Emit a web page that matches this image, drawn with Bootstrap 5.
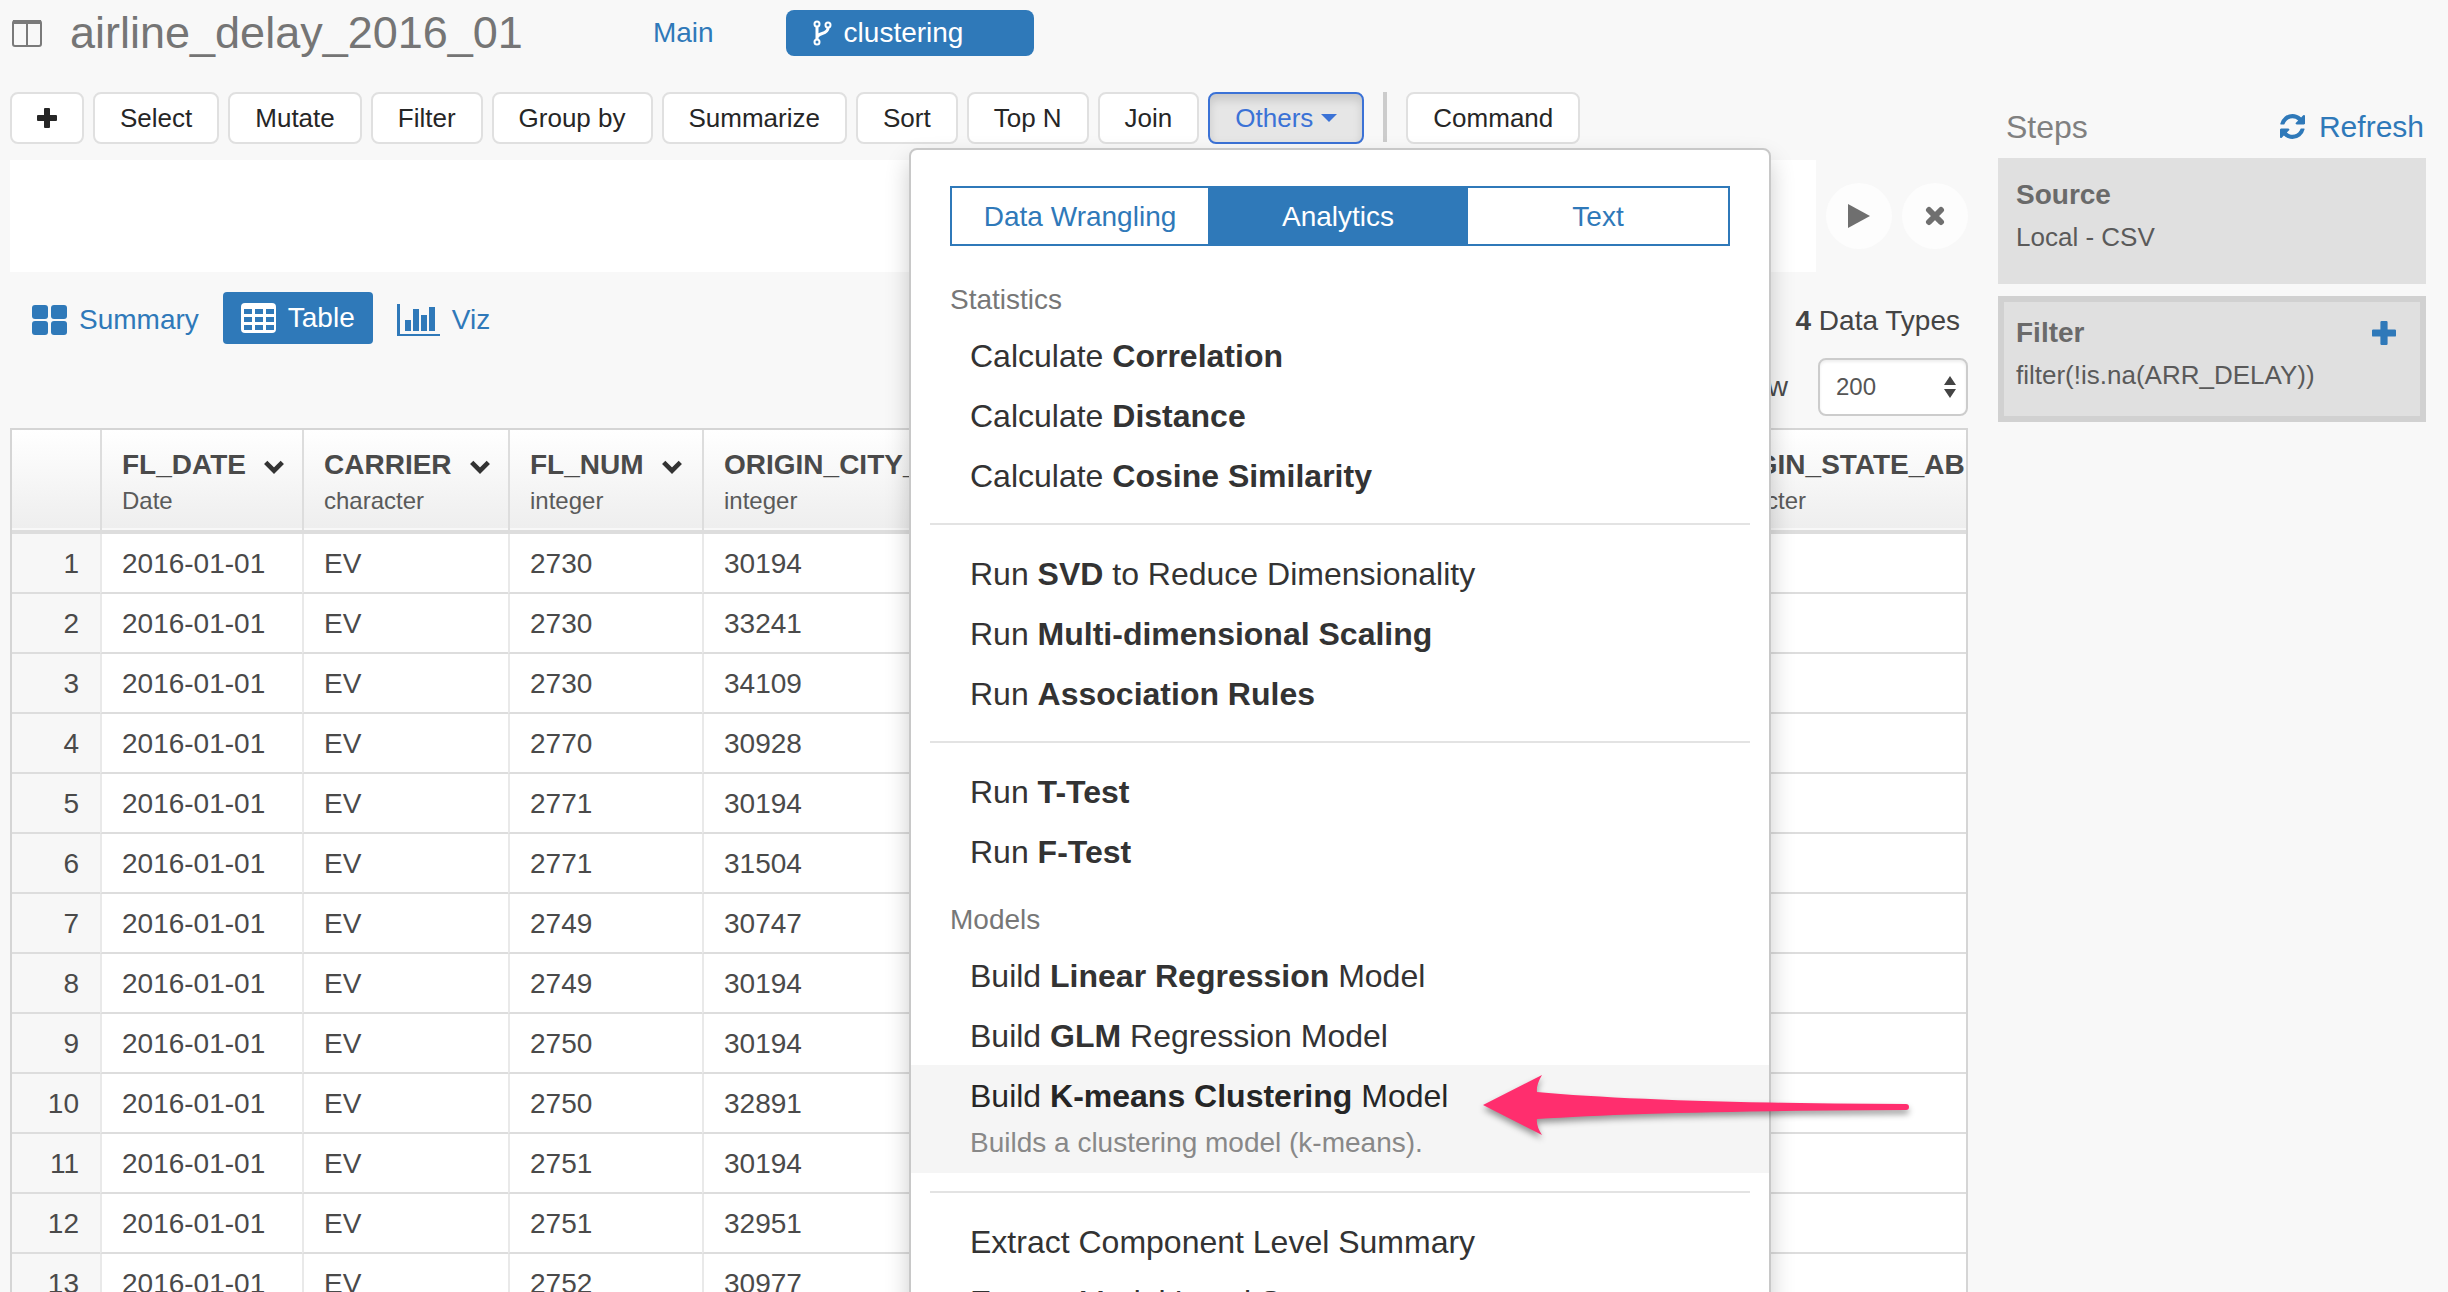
<!DOCTYPE html>
<html lang="en">
<head>
<meta charset="utf-8">
<meta name="viewport" content="width=device-width, initial-scale=1">
<title>airline_delay_2016_01</title>
<link href="https://cdn.jsdelivr.net/npm/bootstrap@5.3.0/dist/css/bootstrap.min.css" rel="stylesheet">
<style>
  :root { --app-blue: #2f79b9; --app-line: #ddd; }
  body {
    font-family: "Liberation Sans", Arial, sans-serif;
    font-size: 28px; line-height: 40px; color: #4a4a4a;
    background: #f8f8f8; height: 100vh; overflow: hidden;
  }
  a { color: var(--app-blue); text-decoration: none; }
  svg { display: block; flex: none; }
  .page-head { padding: 10px 22px 36px 12px; }
  .page-head h1 { font-size: 45px; line-height: 46px; color: #757575; margin: 0 130px 0 28px; font-weight: 400; }
  .branch-btn { width: 248px; height: 46px; padding: 0 24px; gap: 10px; margin-left: 72px; font-size: 28px; line-height: 40px; border: 0; border-radius: 8px; background: var(--app-blue); color: #fff; }
  .work-area { padding: 0 22px 0 10px; gap: 30px; }
  .main-col { min-width: 0; }
  .steps-col { width: 428px; flex: none; }

  .tool-row { gap: 9px; }
  .tool-btn {
    font-size: 26px; line-height: 36px; height: 52px; padding: 6px 25px; white-space: nowrap;
    color: #262626; background: #fff; border: 2px solid #e0e0e0; border-radius: 8px;
  }
  .tool-btn.opened { color: #3b72d6; background: #e6e6e6; border-color: #3b72d6; box-shadow: inset 0 6px 10px rgba(0,0,0,.13); }
  .tool-sep { width: 4px; height: 50px; background: #ccc; margin: 0 10px; }

  .ops-menu {
    position: absolute; left: 899px; top: 56px; width: 862px; z-index: 5; padding-top: 36px;
    background: #fff; border: 2px solid #c8c8c8; border-radius: 8px; box-shadow: 0 12px 24px rgba(0,0,0,.2);
  }
  .ops-tabs { margin: 0 39px 15px; height: 60px; border: 2px solid var(--app-blue); }
  .ops-tabs button { flex: 1 1 0; border: 0; background: #fff; color: var(--app-blue); padding: 2px 0 0; }
  .ops-tabs button:first-child { flex: 0 0 33%; }
  .ops-tabs button.chosen { background: var(--app-blue); color: #fff; }
  .ops-title { font-size: 28px; line-height: 40px; padding: 19px 39px 5px; color: #777; margin: 0; font-weight: 400; }
  .ops-item { display: block; font-size: 32px; line-height: 58px; padding: 2px 59px 0; color: #333; }
  .ops-item.pointed { background: #f5f5f5; color: #262626; }
  .ops-item span { display: block; font-size: 28px; line-height: 36px; padding-bottom: 12px; color: #888; }
  .ops-rule { margin: 18px 19px; border: 0; height: 2px; background: #e3e3e3; opacity: 1; }

  .cmd-row { margin-top: 16px; gap: 10px; }
  .cmd-box { height: 112px; border: 0; background: #fff; resize: none; min-width: 0; }
  .round-btn { width: 66px; height: 66px; border: 0; border-radius: 50%; background: #fdfdfd; padding: 0; }

  .view-row { padding: 20px 0 12px 22px; }
  .view-links { gap: 24px; height: 52px; }
  .view-link { gap: 12px; padding-top: 4px; }
  .view-link.chosen { background: var(--app-blue); color: #fff; border-radius: 4px; padding: 0 18px; height: 52px; }
  .type-count { line-height: 58px; padding-right: 8px; margin-bottom: 8px; color: #444; }
  .row-count {
    width: 150px; height: 58px; margin-left: 30px; padding: 0 16px; font-size: 24px; color: #555; background: #fff;
    border: 2px solid #ccc; border-radius: 8px; appearance: none; box-shadow: inset 0 2px 3px rgba(0,0,0,.07);
  }
  .count-arrows { position: absolute; right: 12px; top: 18px; pointer-events: none; }

  .grid-box { border: 2px solid #d5d5d5; border-bottom: 0; overflow: hidden; }
  .grid-box table { width: 100%; table-layout: fixed; border-collapse: separate; border-spacing: 0; }
  .grid-box thead th {
    height: 104px; padding: 15px 0 0 20px; vertical-align: top; white-space: nowrap; overflow: hidden;
    background: #f8f8f8 linear-gradient(#fff, #eee) no-repeat 0 0 / 100% 98px; background-clip: padding-box;
    border-left: 2px solid var(--app-line); border-bottom: 4px solid var(--app-line);
  }
  .grid-box thead small { display: block; font-size: 24px; line-height: 32px; font-weight: 400; color: #5a5a5a; }
  .grid-box tbody th, .grid-box tbody td { height: 60px; line-height: 40px; padding: 2px 0 0 20px; font-weight: 400; background: #fff; border-left: 2px solid #e9e9e9; border-bottom: 2px solid var(--app-line); }
  .grid-box tbody th { background: #f7f7f7; text-align: right; padding: 2px 21px 0 0; }
  .grid-box tr > :first-child { border-left: 0; }

  .steps-head { height: 66px; padding: 3px 2px 0 8px; }
  .steps-head h2 { font-size: 32px; line-height: 40px; color: #808080; margin: 0; font-weight: 400; }
  .steps-head a { font-size: 30px; gap: 14px; }
  .step-card { background: #e0e0e0; border: 6px solid #e0e0e0; padding: 10px 12px 20px; margin-bottom: 12px; line-height: 42px; }
  .step-card.current { border-color: #d1d1d1; }
  .step-card h3 { font-size: 28px; line-height: 42px; font-weight: 700; color: #6a6a6a; margin: 0; }
  .step-card p { font-size: 26px; line-height: 42px; margin: 0; color: #5a5a5a; }
  .plain-btn { border: 0; background: none; padding: 0 12px 0 0; }
  .pointer-arrow { position: absolute; left: 1476px; top: 1069px; z-index: 9; filter: drop-shadow(0 4px 3px rgba(0,0,0,.4)); }
</style>
<script src="https://cdn.jsdelivr.net/npm/bootstrap@5.3.0/dist/js/bootstrap.bundle.min.js"></script>
</head>
<body class="position-relative">

<header class="page-head d-flex align-items-center">
  <svg width="30" height="28" viewBox="0 0 30 28" fill="none" stroke="#7a7a7a" stroke-width="2"><rect x="1" y="2" width="28" height="25" rx="2"/><path d="M1 3h28" stroke-width="4"/><path d="M15 3v24"/></svg>
  <h1>airline_delay_2016_01</h1>
  <a href="#">Main</a>
  <button type="button" class="branch-btn d-flex align-items-center">
    <svg width="24" height="26" viewBox="0 0 24 26" fill="none" stroke="#fff" stroke-width="2"><circle cx="7" cy="4" r="2.500"/><circle cx="7" cy="22" r="2.500"/><circle cx="18" cy="5" r="2.500"/><path d="M7 7v12M18 8c0 7-11 4-11 10" stroke-width="3"/></svg>
    clustering
  </button>
</header>

<div class="work-area d-flex align-items-start">
  <main class="main-col flex-grow-1">
    <div class="tool-row d-flex align-items-start position-relative">
      <button type="button" class="tool-btn" aria-label="Add"><svg width="20" height="20" viewBox="0 0 20 20" fill="#262626"><path d="M8 0h4q1 0 1 1v6h6q1 0 1 1v4q0 1-1 1h-6v6q0 1-1 1H8q-1 0-1-1v-6H1q-1 0-1-1V8q0-1 1-1h6V1q0-1 1-1z"/></svg></button>
      <button type="button" class="tool-btn">Select</button>
      <button type="button" class="tool-btn">Mutate</button>
      <button type="button" class="tool-btn">Filter</button>
      <button type="button" class="tool-btn">Group by</button>
      <button type="button" class="tool-btn">Summarize</button>
      <button type="button" class="tool-btn">Sort</button>
      <button type="button" class="tool-btn">Top N</button>
      <button type="button" class="tool-btn">Join</button>
      <button type="button" class="tool-btn opened d-flex align-items-center gap-2" aria-expanded="true">Others <svg width="16" height="8" viewBox="0 0 16 8" fill="#3b72d6"><path d="M0 0h16L8 8z"/></svg></button>
      <div class="tool-sep"></div>
      <button type="button" class="tool-btn">Command</button>

      <div class="ops-menu">
        <div class="ops-tabs d-flex">
          <button type="button">Data Wrangling</button>
          <button type="button" class="chosen">Analytics</button>
          <button type="button">Text</button>
        </div>
        <h6 class="ops-title">Statistics</h6>
        <a href="#" class="ops-item">Calculate <b>Correlation</b></a>
        <a href="#" class="ops-item">Calculate <b>Distance</b></a>
        <a href="#" class="ops-item">Calculate <b>Cosine Similarity</b></a>
        <hr class="ops-rule">
        <a href="#" class="ops-item">Run <b>SVD</b> to Reduce Dimensionality</a>
        <a href="#" class="ops-item">Run <b>Multi-dimensional Scaling</b></a>
        <a href="#" class="ops-item">Run <b>Association Rules</b></a>
        <hr class="ops-rule">
        <a href="#" class="ops-item">Run <b>T-Test</b></a>
        <a href="#" class="ops-item">Run <b>F-Test</b></a>
        <h6 class="ops-title">Models</h6>
        <a href="#" class="ops-item">Build <b>Linear Regression</b> Model</a>
        <a href="#" class="ops-item">Build <b>GLM</b> Regression Model</a>
        <a href="#" class="ops-item pointed">Build <b>K-means Clustering</b> Model<span>Builds a clustering model (k-means).</span></a>
        <hr class="ops-rule">
        <a href="#" class="ops-item">Extract Component Level Summary</a>
        <a href="#" class="ops-item">Extract Model Level Summary</a>
      </div>
    </div>

    <div class="cmd-row d-flex align-items-center">
      <textarea class="cmd-box flex-grow-1" aria-label="Command"></textarea>
      <button type="button" class="round-btn d-flex align-items-center justify-content-center" aria-label="Run"><svg width="22" height="24" viewBox="0 0 22 24" fill="#6f6f6f"><path d="M0 0l22 12L0 24z"/></svg></button>
      <button type="button" class="round-btn d-flex align-items-center justify-content-center" aria-label="Clear"><svg width="20" height="20" viewBox="0 0 20 20" stroke="#6f6f6f" stroke-width="6" stroke-linecap="round"><path d="M4 4l12 12M16 4L4 16"/></svg></button>
    </div>

    <div class="view-row d-flex justify-content-between align-items-start">
      <nav class="view-links d-flex align-items-center">
        <a href="#" class="view-link d-flex align-items-center"><svg width="35" height="30" viewBox="0 0 35 30" fill="#2f79b9"><rect width="16" height="14" rx="3"/><rect x="19" width="16" height="14" rx="3"/><rect y="16" width="16" height="14" rx="3"/><rect x="19" y="16" width="16" height="14" rx="3"/></svg>Summary</a>
        <a href="#" class="view-link chosen d-flex align-items-center"><svg width="35" height="30" viewBox="0 0 35 30"><rect width="35" height="30" rx="4" fill="#fff"/><path d="M3 6h8v5H3zm11 0h8v5h-8zm11 0h8v5h-8zM3 14h8v5H3zm11 0h8v5h-8zm11 0h8v5h-8zM3 22h8v5H3zm11 0h8v5h-8zm11 0h8v5h-8z" fill="#2f79b9"/></svg>Table</a>
        <a href="#" class="view-link d-flex align-items-center"><svg width="43" height="32" viewBox="0 0 43 32" fill="#2f79b9"><path d="M0 0h3v30h40v2H0zM8 16h6v11H8zm8-11h6v22h-6zm8 6h6v16h-6zm8-8h6v24h-6z"/></svg>Viz</a>
      </nav>
      <div class="text-end">
        <div class="type-count"><b>4</b> Data Types</div>
        <div class="d-flex align-items-center justify-content-end position-relative">
          <label for="rowCount">Show</label>
          <select id="rowCount" class="row-count"><option>200</option></select>
          <svg class="count-arrows" width="12" height="22" viewBox="0 0 12 22" fill="#444"><path d="M0 9l6-9 6 9zM0 13h12l-6 9z"/></svg>
        </div>
      </div>
    </div>

    <div class="grid-box">
      <table>
        <colgroup><col style="width:88px"><col style="width:202px"><col style="width:206px"><col style="width:194px"><col style="width:460px"><col><col style="width:282px"></colgroup>
        <thead>
          <tr>
            <th></th>
            <th><div class="d-flex align-items-center col-name">FL_DATE</div><small>Date</small></th>
            <th><div class="d-flex align-items-center col-name">CARRIER</div><small>character</small></th>
            <th><div class="d-flex align-items-center col-name">FL_NUM</div><small>integer</small></th>
            <th><div class="d-flex align-items-center col-name">ORIGIN_CITY_MARKET_ID</div><small>integer</small></th>
            <th></th>
            <th><div class="d-flex align-items-center">ORIGIN_STATE_AB</div><small>character</small></th>
          </tr>
        </thead>
        <tbody id="rows"></tbody>
      </table>
    </div>
  </main>

  <aside class="steps-col">
    <div class="steps-head d-flex justify-content-between align-items-center">
      <h2>Steps</h2>
      <a href="#" class="d-flex align-items-center"><svg width="25" height="25" viewBox="0 128 1536 1536" fill="#2f79b9"><path d="M1511 1056q0 5-1 7-64 268-268 434.500T764 1664q-146 0-282.500-55T238 1452l-129 129q-19 19-45 19t-45-19-19-45v-448q0-26 19-45t45-19h448q26 0 45 19t19 45-19 45l-137 137q71 66 161 102t187 36q134 0 250-65t186-179q11-17 53-117 8-23 30-23h192q13 0 22.500 9.500t9.500 22.500zM1536 256v448q0 26-19 45t-45 19h-448q-26 0-45-19t-19-45 19-45l138-138Q969 384 768 384q-134 0-250 65T332 628q-11 17-53 117-8 23-30 23H50q-13 0-22.500-9.500T18 736v-7q65-268 270-434.500T768 128q146 0 284 55.500T1297 339l130-129q19-19 45-19t45 19 19 45z"/></svg>Refresh</a>
    </div>
    <div class="step-card"><h3>Source</h3><p>Local - CSV</p></div>
    <div class="step-card current">
      <div class="d-flex justify-content-between align-items-center"><h3>Filter</h3>
        <button type="button" class="plain-btn" aria-label="Add step"><svg width="24" height="24" viewBox="0 0 20 20" fill="#2f79b9"><path d="M8 0h4q1 0 1 1v6h6q1 0 1 1v4q0 1-1 1h-6v6q0 1-1 1H8q-1 0-1-1v-6H1q-1 0-1-1V8q0-1 1-1h6V1q0-1 1-1z"/></svg></button>
      </div>
      <p>filter(!is.na(ARR_DELAY))</p>
    </div>
  </aside>
</div>

<svg class="pointer-arrow" width="440" height="72" viewBox="0 0 440 72" fill="#ff2e6e"><path d="M7 36L66 6Q60 16 61 23Q180 34 430 35Q433 35 433 38Q433 41 430 41Q180 42 61 50Q60 57 66 66z"/></svg>

<script>
  const flights = [[2730,30194],[2730,33241],[2730,34109],[2770,30928],[2771,30194],[2771,31504],[2749,30747],[2749,30194],[2750,30194],[2750,32891],[2751,30194],[2751,32951],[2752,30977]];
  document.getElementById('rows').innerHTML = flights.map(([num, city], i) =>
    `<tr><th scope="row">${i + 1}</th><td>2016-01-01</td><td>EV</td><td>${num}</td><td>${city}</td><td></td><td></td></tr>`).join('');
  document.querySelectorAll('.col-name').forEach(el => el.insertAdjacentHTML('beforeend',
    '<svg class="ms-3 mt-1" width="24" height="18" viewBox="0 0 26 18" fill="none" stroke="#333" stroke-width="5"><path d="M4 4l9 9 9-9"/></svg>'));
</script>
</body>
</html>
